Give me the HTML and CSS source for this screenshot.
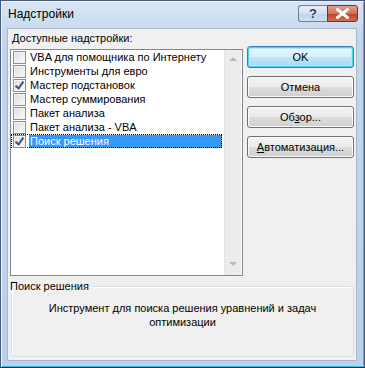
FILE: index.html
```html
<!DOCTYPE html>
<html lang="ru">
<head>
  <meta charset="UTF-8" />
  <title>Надстройки</title>
  <link rel="stylesheet" href="styles.css">
</head>
<body>

  <div class="window">
    <div class="titlebar">
      <span class="title">Надстройки</span>
      <div class="caption-buttons">
        <span class="cap-btn help">?</span>
        <span class="cap-btn close">
          <svg width="13" height="11" viewBox="0 0 13 11">
            <path d="M1.5 1.5 L11.5 9.5 M11.5 1.5 L1.5 9.5" stroke="#fff" stroke-width="3" stroke-linecap="square"/>
          </svg>
        </span>
      </div>
    </div>

    <div class="content">
      <div class="top">
        <div class="left">
          <div class="label"><u>Д</u>оступные надстройки:</div>
          <div class="listbox">
            <ul class="items">
              <li><span class="check"></span><span class="text">VBA для помощника по Интернету</span></li>
              <li><span class="check"></span><span class="text">Инструменты для евро</span></li>
              <li><span class="check checked"></span><span class="text">Мастер подстановок</span></li>
              <li><span class="check"></span><span class="text">Мастер суммирования</span></li>
              <li><span class="check"></span><span class="text">Пакет анализа</span></li>
              <li><span class="check"></span><span class="text">Пакет анализа - VBA</span></li>
              <li class="selected"><span class="check checked"></span><span class="text">Поиск решения</span></li>
            </ul>
            <div class="scrollbar">
              <span class="arrow up"></span>
              <span class="arrow down"></span>
            </div>
          </div>
        </div>

        <div class="buttons">
          <button class="btn default">OK</button>
          <button class="btn">Отмена</button>
          <button class="btn">Об<u>з</u>ор...</button>
          <button class="btn"><u>А</u>втоматизация...</button>
        </div>
      </div>

      <fieldset class="groupbox">
        <legend>Поиск решения</legend>
        <p class="description">Инструмент для поиска решения уравнений и задач оптимизации</p>
      </fieldset>
    </div>
  </div>

</body>
</html>
```

FILE: styles.css
```css
html, body {
  margin: 0;
  padding: 0;
}

body {
  width: 365px;
  height: 368px;
  font-family: 'Liberation Sans', Arial, sans-serif;
  font-size: 11px;
  color: #000;
  background: #fff;
}

.window {
  width: 365px;
  height: 368px;
  box-sizing: border-box;
  border: 1px solid #4a5d78;
  border-bottom-color: #1d2a3a;
  background: linear-gradient(#d9e5f3, #c3d5ea 40px, #bcd1ea);
  box-shadow: inset 1px 1px 0 #e9f1fb, inset -1px -1px 0 #3fb6e4;
  display: flex;
  flex-direction: column;
  padding: 0 7px 6px 6px;
}

.titlebar {
  height: 28px;
  display: flex;
  align-items: flex-start;
  justify-content: space-between;
}

.title {
  margin: 6px 0 0 1px;
  font-size: 12px;
}

.caption-buttons {
  display: flex;
  margin-top: 4px;
  margin-right: -1px;
}

.cap-btn {
  height: 17px;
  box-sizing: border-box;
  display: flex;
  align-items: center;
  justify-content: center;
  border: 1px solid #6d7f9a;
}

.help {
  width: 29px;
  border-radius: 3px 0 0 3px;
  border-right: none;
  background: linear-gradient(#e6eef8, #d3e0f0 50%, #c0d2ea 51%, #cfdff2);
  color: #2b3d59;
  font-size: 13px;
  font-weight: bold;
  text-shadow: 0 0 2px #fff;
}

.close {
  width: 31px;
  border-color: #7a2e25;
  border-radius: 0 3px 3px 0;
  background: linear-gradient(#e3a090, #d0705f 50%, #bd3f2b 51%, #d36e50);
}

.content {
  flex: 1;
  background: #f0f0f0;
  border: 1px solid #a6b7cc;
  padding: 0 2px 3px 2px;
  display: flex;
  flex-direction: column;
}

.top {
  display: flex;
  justify-content: space-between;
}

.label {
  margin: 3px 0 4px 2px;
  line-height: 13px;
}

.listbox {
  width: 231px;
  height: 225px;
  border: 1px solid #828790;
  background: #fff;
  display: flex;
  justify-content: space-between;
}

.items {
  list-style: none;
  margin: 0;
  padding: 0;
}

.items li {
  height: 14px;
  display: flex;
  align-items: center;
  box-sizing: border-box;
}

.items li.selected {
  outline: 1px dotted #000;
  outline-offset: -1px;
  width: 211px;
}

.check {
  width: 13px;
  height: 13px;
  box-sizing: border-box;
  margin: 0 3px 0 2px;
  border: 1px solid #8e8f8f;
  background: linear-gradient(135deg, #dcdcdc, #fbfbfb);
  box-shadow: inset 0 0 0 1px #f4f4f4;
  position: relative;
}

.check.checked::after {
  content: "";
  position: absolute;
  left: 3px;
  top: 0px;
  width: 3px;
  height: 7px;
  border: solid #3d4f8a;
  border-width: 0 2px 2px 0;
  transform: rotate(35deg);
}

.text {
  line-height: 13px;
  padding: 0 1px;
  white-space: nowrap;
}

.selected .text {
  background: #3399ff;
  color: #fff;
  flex: 1;
  height: 13px;
}

.scrollbar {
  width: 17px;
  background: #ececec;
  border-left: 1px solid #e3e3e3;
  margin-right: 1px;
  display: flex;
  flex-direction: column;
  justify-content: space-between;
  align-items: center;
  padding: 7px 0 9px;
  box-sizing: border-box;
}

.arrow {
  width: 0;
  height: 0;
  border-left: 4px solid transparent;
  border-right: 4px solid transparent;
}

.arrow.up {
  border-bottom: 4px solid #b8b8b8;
}

.arrow.down {
  border-top: 4px solid #b8b8b8;
}

.buttons {
  display: flex;
  flex-direction: column;
  gap: 8px;
  margin-top: 17px;
}

.btn {
  width: 107px;
  height: 22px;
  font-family: inherit;
  font-size: 11px;
  color: #000;
  padding: 0;
  border: 1px solid #707070;
  border-radius: 3px;
  background: linear-gradient(#f2f2f2, #ebebeb 50%, #dddddd 51%, #cfcfcf);
  box-shadow: inset 0 0 0 1px #fcfcfc;
}

.btn.default {
  border-color: #3c7fb1;
  box-shadow: inset 0 0 0 1px #48d3f9, inset 0 0 0 2px #b8e9fa;
  background: linear-gradient(#eaf6fd, #d9f0fc 50%, #bee6fd 51%, #a7d9f5);
}

.groupbox {
  box-sizing: border-box;
  margin: 4px 0 0 1px;
  padding: 0;
  height: 77px;
  border: 1px solid #d5dfe5;
  border-radius: 3px;
  box-shadow: inset 1px 1px 0 #fff;
}

.groupbox legend {
  padding: 0 1px 0 0;
  margin-left: -2px;
  line-height: 13px;
}

.description {
  margin: 8px 28px 0;
  text-align: center;
  line-height: 14px;
}
```
